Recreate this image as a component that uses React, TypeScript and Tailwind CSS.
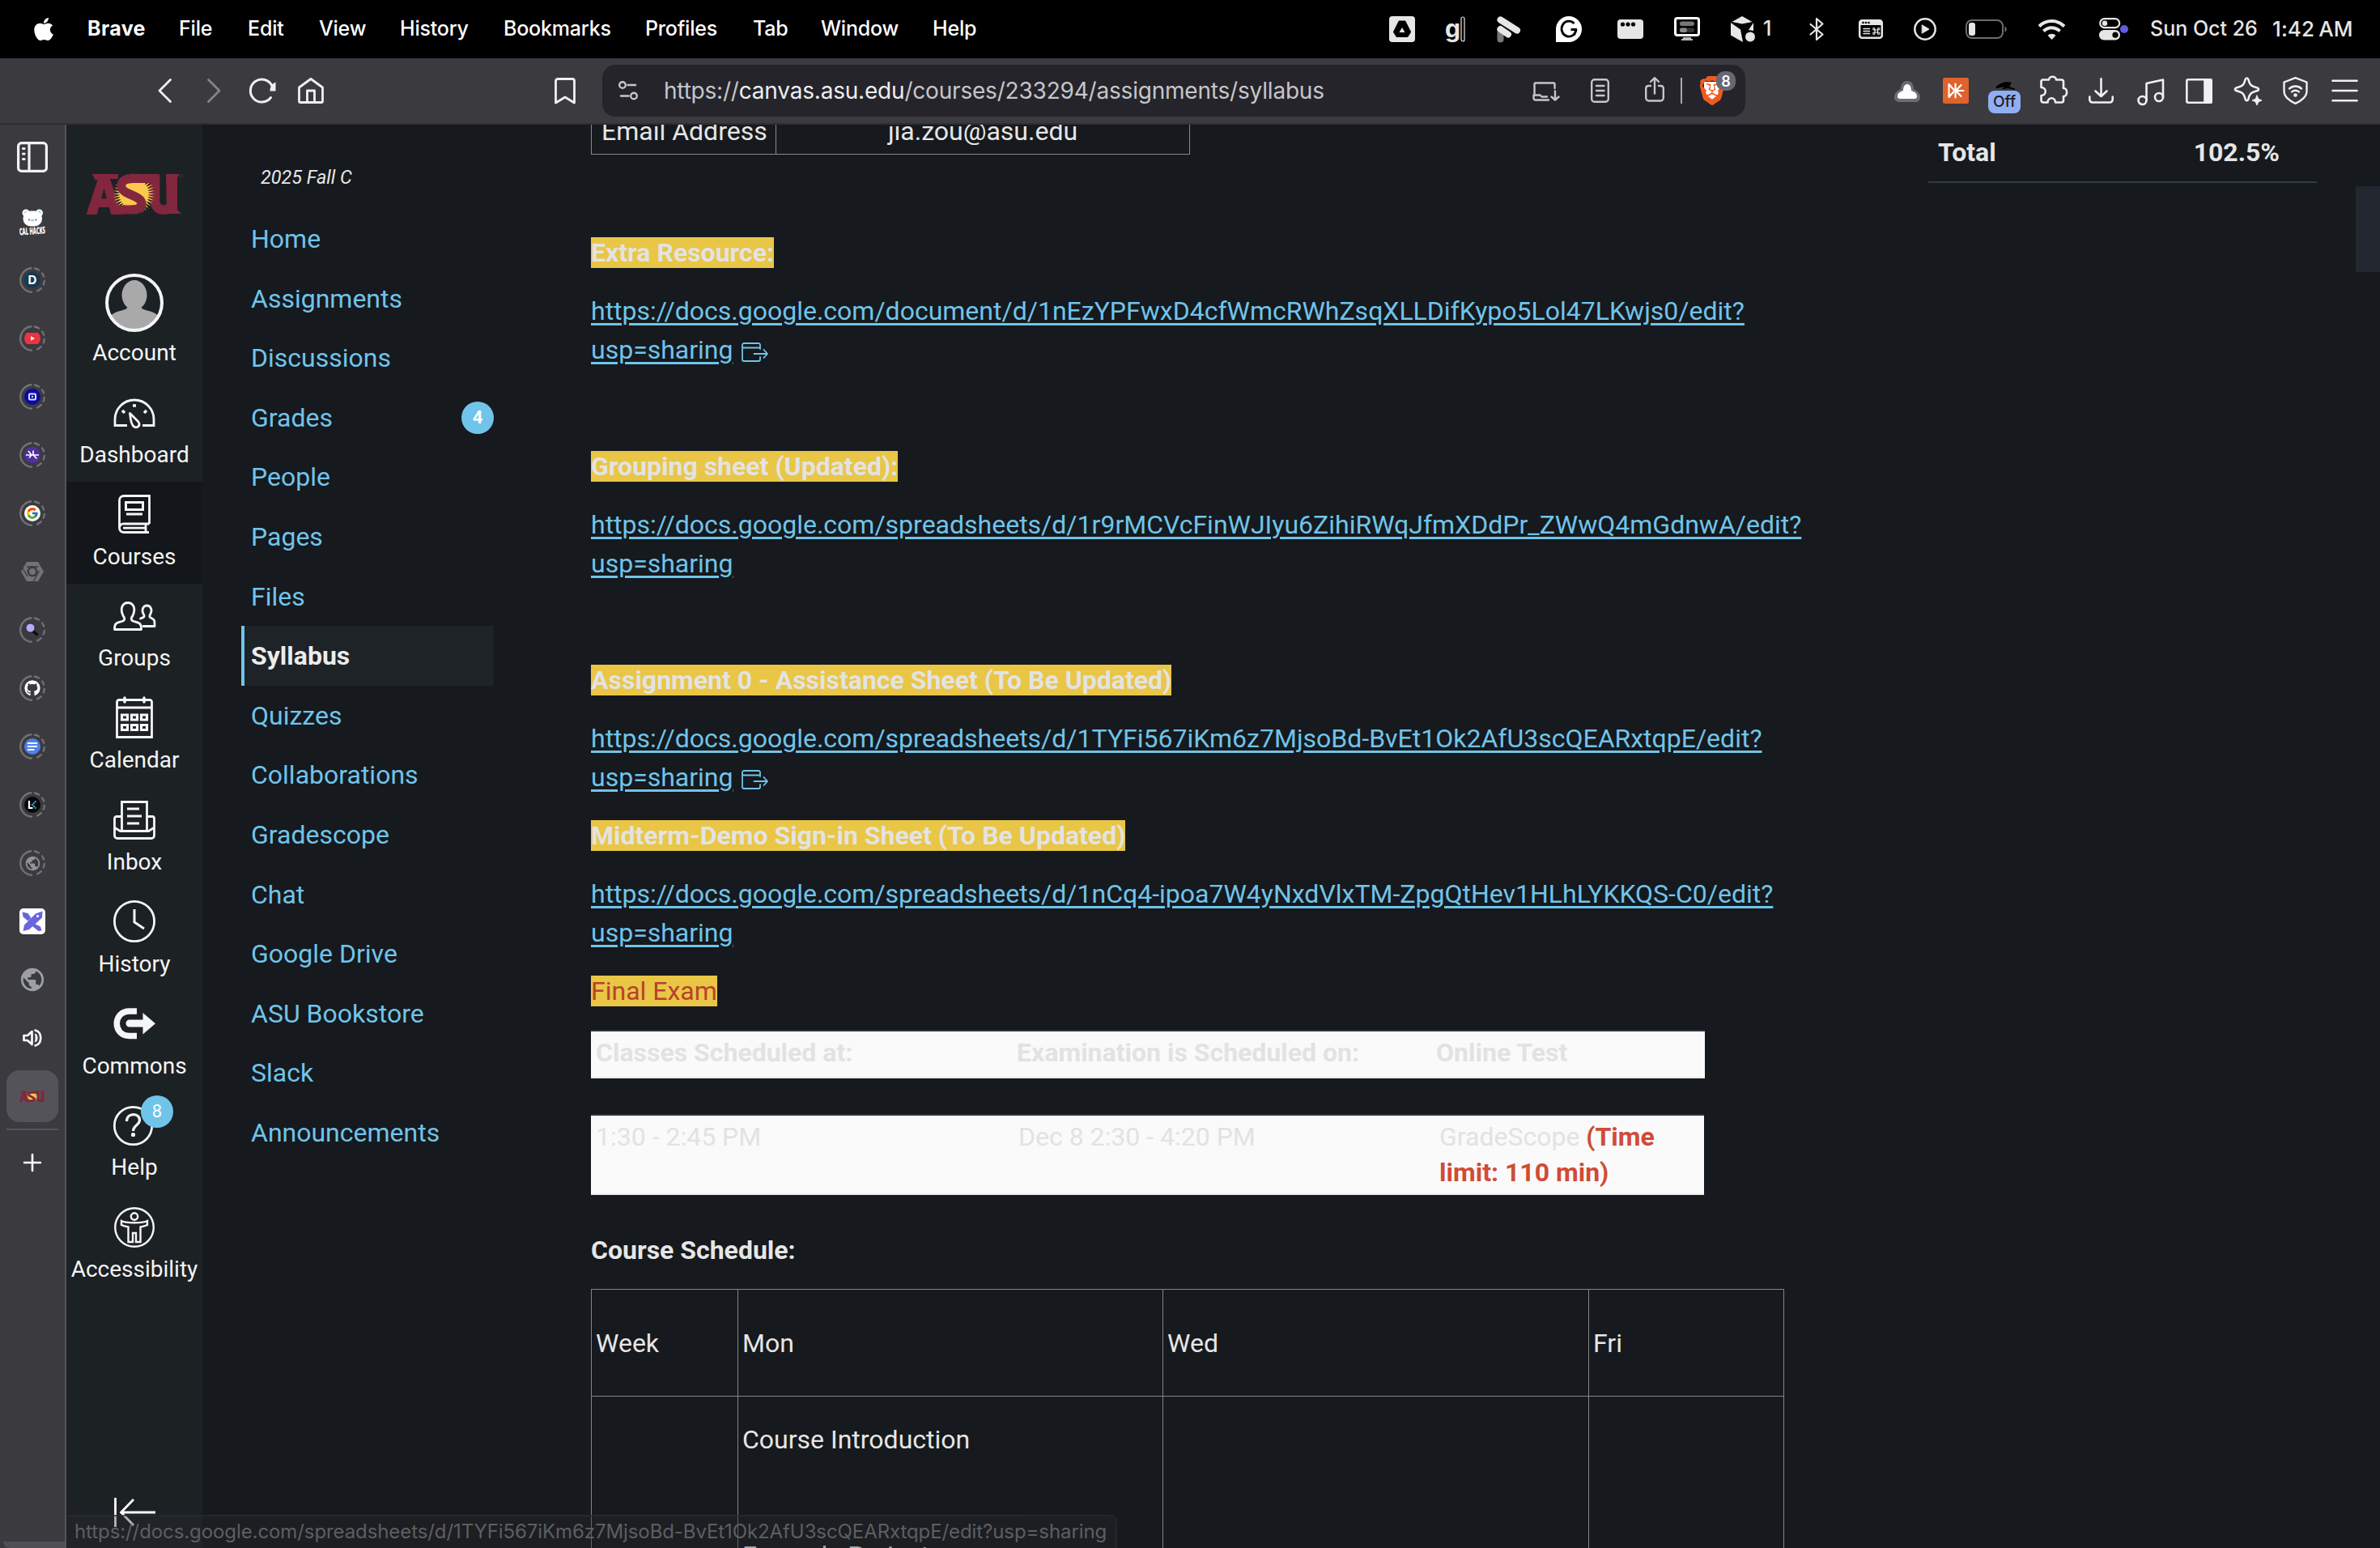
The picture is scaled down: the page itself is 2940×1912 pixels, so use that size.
import React from "react";
import { FaApple } from "react-icons/fa";
import { FaGithub } from "react-icons/fa6";
import { FcGoogle } from "react-icons/fc";
import { SiBrave } from "react-icons/si";
import { MdPublic } from "react-icons/md";

type Box = { w: number; h: number; className?: string; sw?: number; children: React.ReactNode };

function Ico({ w, h, className = "", sw = 2.5, children }: Box) {
  return (
    <svg width={w} height={h} viewBox={`0 0 ${w} ${h}`} fill="none" stroke="currentColor" strokeWidth={sw} strokeLinecap="round" strokeLinejoin="round" className={`shrink-0 overflow-visible ${className}`}>
      {children}
    </svg>
  );
}

function Slot({ className, children }: { className: string; children?: React.ReactNode }) {
  return <div className={`flex h-full shrink-0 items-center whitespace-nowrap ${className}`}>{children}</div>;
}

function MenuBar() {
  const menus: [string, string][] = [
    ["Brave", "w-[113px] font-bold tracking-[0.4px]"],
    ["File", "w-[85px]"],
    ["Edit", "w-[88px]"],
    ["View", "w-[100px]"],
    ["History", "w-[128px]"],
    ["Bookmarks", "w-[175px]"],
    ["Profiles", "w-[133px]"],
    ["Tab", "w-[84px]"],
    ["Window", "w-[138px]"],
    ["Help", "w-[100px]"],
  ];
  return (
    <header className="flex h-[72px] items-center bg-black font-['Inter'] text-[25px] font-medium tracking-[-0.2px] text-white">
      <Slot className="w-[108px] pl-[40px]">
        <FaApple className="h-[32px] w-[28px]" />
      </Slot>
      {menus.map(([m, c]) => (
        <Slot key={m} className={`pb-px ${c}`}>{m}</Slot>
      ))}
      <div className="ml-auto flex h-full w-[1224px] text-[#e6e6e6]">
        <Slot className="w-[69px]">
          <Ico w={32} h={32}>
            <rect width="32" height="32" rx="4" fill="#e6e6e6" stroke="none" />
            <path d="M12.5 6.5h7l6.5 13-3.5 5.5h-13L6 19.500z" fill="#000" stroke="#000" strokeWidth="2" />
            <path d="M16 14l3.500 6h-7z" fill="#e6e6e6" stroke="none" />
          </Ico>
        </Slot>
        <Slot className="w-[64px]">
          <span className="pb-[3px] text-[30px] leading-none font-bold">g</span>
          <Ico w={6} h={32} sw={1.2}><rect x="1" y="1" width="4" height="30" rx="2" /></Ico>
        </Slot>
        <Slot className="w-[73px]">
          <Ico w={30} h={32}>
            <path d="M4.500 17v11.500" stroke="#777" strokeWidth="8" />
            <path d="M4.500 16l9.500 6.500" strokeWidth="8" />
            <path d="M4.500 4.500l20.500 13" strokeWidth="8" />
          </Ico>
        </Slot>
        <Slot className="w-[76px]">
          <Ico w={32} h={32}>
            <path d="M0 32V16a16 16 0 1 1 16 16z" fill="#fff" stroke="none" />
            <path d="M22.500 9A9 9.500 0 1 0 25 16.500h-6.500M25 16.500l-2.500 7" stroke="#000" strokeWidth="2.800" strokeLinecap="butt" />
          </Ico>
        </Slot>
        <Slot className="w-[70px]">
          <Ico w={32} h={24}>
            <rect width="32" height="24" rx="4" fill="#e6e6e6" stroke="none" />
            <g fill="#000" stroke="none"><circle cx="6.500" cy="6" r="2.600" /><circle cx="13" cy="6" r="2.600" /><circle cx="19.500" cy="6" r="2.600" /></g>
          </Ico>
        </Slot>
        <Slot className="w-[70px]">
          <Ico w={32} h={30}>
            <rect x="1.500" y="1.500" width="29" height="21" rx="2.500" stroke="#fff" strokeWidth="3" />
            <path d="M11 25h10v2h2v2H9v-2h2z" fill="#bbb" stroke="none" />
            <rect x="7" y="5.500" width="18" height="5.500" rx="2.700" fill="#777" stroke="none" />
            <rect x="7" y="13.500" width="18" height="5.500" rx="2.700" fill="#333" stroke="none" />
            <rect x="7" y="13.500" width="9" height="5.500" rx="2.700" fill="#888" stroke="none" />
          </Ico>
        </Slot>
        <Slot className="w-[40px]">
          <Ico w={30} h={32}>
            <path d="M14 0l12.500 7L14 9.500 1.500 7z" fill="#e6e6e6" stroke="none" />
            <path d="M0 8l12 8.500L15 32 0 23.500z" fill="#e6e6e6" stroke="none" />
            <path d="M28 8v10l-6-1z" fill="#e6e6e6" stroke="none" />
            <circle cx="24" cy="25.500" r="6" fill="#e6e6e6" stroke="none" />
          </Ico>
        </Slot>
        <Slot className="w-[57px] pb-px">1</Slot>
        <Slot className="w-[61px]">
          <Ico w={18} h={28} sw={2.200}><path d="M1.500 8l15 12.500-7.500 6.500V1l7.500 6.500L1.500 20.500" /></Ico>
        </Slot>
        <Slot className="w-[68px]">
          <Ico w={30} h={24}>
            <rect x="1.200" y="1.200" width="27.600" height="21.600" rx="3" />
            <path d="M2 2h26v5H2z" fill="#e6e6e6" stroke="none" />
            <g fill="#000" stroke="none"><circle cx="5.500" cy="4" r="1.300" /><circle cx="9" cy="4" r="1.300" /><circle cx="12.500" cy="4" r="1.300" /></g>
            <path d="M6 11.500h7.500M6 14.500h7.500M6 17.500h7.500" strokeWidth="1.600" />
            <path d="M20 12.500v4M23.500 12.500v4M19.500 13h4.500M19.500 16h4.500" strokeWidth="1.200" />
            <g strokeWidth="1.100"><circle cx="18.800" cy="11.800" r="1.200" /><circle cx="24.700" cy="11.800" r="1.200" /><circle cx="18.800" cy="17.200" r="1.200" /><circle cx="24.700" cy="17.200" r="1.200" /></g>
          </Ico>
        </Slot>
        <Slot className="w-[64px]">
          <Ico w={28} h={28}>
            <circle cx="14" cy="14" r="12.700" />
            <path d="M10.500 9l8.500 5-8.500 5z" fill="#e6e6e6" strokeWidth="1" />
          </Ico>
        </Slot>
        <Slot className="w-[89px]">
          <Ico w={51} h={24}>
            <rect x="1" y="1" width="45" height="22" rx="7" stroke="#6d6d6d" strokeWidth="2" />
            <path d="M48.500 8.500c3 1 3 6 0 7z" fill="#6d6d6d" stroke="none" />
            <rect x="4" y="4" width="8" height="16" rx="3" fill="#e6e6e6" stroke="none" />
          </Ico>
        </Slot>
        <Slot className="w-[76px]">
          <Ico w={35} h={26}>
            <path d="M2 9.500a22 22 0 0 1 31 0M7.500 15.500a14 14 0 0 1 20 0" strokeWidth="4" strokeLinecap="butt" />
            <path d="M17.500 26l-5-5.200a7 7 0 0 1 10 0z" fill="#e6e6e6" stroke="none" />
          </Ico>
        </Slot>
        <Slot className="w-[62px]">
          <Ico w={36} h={28}>
            <rect x="1.200" y="1.200" width="24" height="11" rx="5.500" strokeWidth="2.200" />
            <circle cx="7" cy="6.700" r="3.200" fill="#e6e6e6" stroke="none" />
            <rect y="15" width="26" height="12.500" rx="6.200" fill="#e6e6e6" stroke="none" />
            <circle cx="20" cy="21.200" r="3.600" fill="#000" stroke="none" />
            <circle cx="31" cy="14" r="5" fill="#5e5ce6" stroke="none" />
          </Ico>
        </Slot>
        <Slot className="w-[152px] pb-px pl-px tracking-[0px]">Sun Oct 26</Slot>
        <Slot className="w-[120px] pb-px text-[26px] tracking-[0.1px] [word-spacing:-2px]">1:42 AM</Slot>
      </div>
    </header>
  );
}

function Toolbar() {
  return (
    <div className="flex h-[82px] border-b-2 border-[#2f2e33] bg-[#3b3a3f] pl-[196px] text-[#f0f0f2]">
      <Slot className="w-[60px]"><Ico w={17} h={30} sw={2.800}><path d="M14.500 1.500L1 15l13.500 13.500" /></Ico></Slot>
      <Slot className="w-[51px] text-[#858489]"><Ico w={17} h={30} sw={2.800}><path d="M1.500 1.500L15 15 1.500 28.500" /></Ico></Slot>
      <Slot className="w-[61px]">
        <Ico w={34} h={32} sw={3}>
          <path d="M27.500 24.500A14 14 0 1 1 29 10" />
          <path d="M33.500 5.500v11H26.500a11 11 0 0 1 7-11z" fill="currentColor" stroke="none" />
        </Ico>
      </Slot>
      <Slot className="w-[317px]">
        <Ico w={32} h={32} sw={2.800}>
          <path d="M1.500 29.500V12L16 1.500 30.500 12v17.500a1.500 1.500 0 0 1-1.500 1H3a1.500 1.500 0 0 1-1.500-1z" />
          <path d="M11.500 30V16h9v14" />
        </Ico>
      </Slot>
      <Slot className="w-[59px]"><Ico w={26} h={33} sw={2.800}><path d="M1.500 31V4a2.500 2.500 0 0 1 2.500-2.500h18A2.500 2.500 0 0 1 24.500 4v27L13 24z" /></Ico></Slot>
      <div className="my-2 flex h-[64px] w-[1412px] items-center rounded-[16px] bg-[#25242a] pl-[20px] font-['Inter'] text-[#c6c6ca]">
        <Slot className="w-[56px]">
          <Ico w={24} h={24} sw={2.400}><circle cx="5" cy="5" r="3.800" /><path d="M11.500 5H21" /><circle cx="19" cy="18.500" r="3.800" /><path d="M3 18.500h9.500" /></Ico>
        </Slot>
        <Slot className="w-[1073px] text-[28px] tracking-[-0.2px]">
          https://<span className="text-[#ededf0]">canvas.asu.edu</span>/courses/233294/assignments/syllabus
        </Slot>
        <Slot className="w-[72px]">
          <Ico w={33} h={24} sw={2.400} className="mb-[-2px]">
            <path d="M2.500 15V3A1.500 1.500 0 0 1 4 1.500h22A1.500 1.500 0 0 1 27.500 3v5M1.500 16.500h8l2 2h6.500M1.500 16.500V20a2.500 2.500 0 0 0 2.500 2.500h16M28 11.500V22M23.500 18.500l4.500 4 4.500-4" />
          </Ico>
        </Slot>
        <Slot className="w-[67px]">
          <Ico w={23} h={30} sw={2.400}><rect x="1.200" y="1.200" width="20.600" height="27.600" rx="3.500" /><path d="M7 9h9.500M7 15h9.500M7 21h9.500" /></Ico>
        </Slot>
        <Slot className="w-[44px]">
          <Ico w={24} h={31} sw={2.400} className="mb-[4px]"><path d="M7 11H4.500A3.300 3.300 0 0 0 1.200 14v12a3.500 3.500 0 0 0 3.500 3.500h14.600a3.500 3.500 0 0 0 3.500-3.500V14a3.300 3.300 0 0 0-3.300-3H17M12 20.500V1.500M7 6l5-4.800L17 6" /></Ico>
        </Slot>
        <div className="h-[32px] w-[2px] bg-[#a9a8ad]" />
        <div className="relative ml-[21px] h-[36px] w-[34px]">
          <div className="absolute top-[7px] left-[6px] h-[22px] w-[20px] rounded-b-full bg-white" />
          <SiBrave className="absolute top-0 left-[-2px] h-[36px] w-[36px] text-[#f05a22]" />
          <div className="absolute top-[-6px] left-[21px] flex h-[24px] w-[24px] items-center justify-center rounded-[10px] bg-[#666873] text-[18px] font-semibold text-white">8</div>
        </div>
      </div>
      <Slot className="ml-[184px] w-[60px]">
        <Ico w={32} h={26} className="mt-[2px]">
          <path d="M16 0c6 0 8 5 8 10 4 2 8 5 8 10 0 4-3 6-6 6H6c-3 0-6-2-6-6 0-5 4-8 8-10C8 5 10 0 16 0z" fill="#6d6c70" stroke="none" />
          <path d="M16 4c3.500 0 5 4 5 8 4 1.500 7 3 7 7 0 2-1 3-3 3H7c-2 0-3-1-3-3 0-4 3-5.500 7-7 0-4 1.500-8 5-8z" fill="#fff" stroke="none" />
        </Ico>
      </Slot>
      <Slot className="w-[56px]">
        <Ico w={32} h={32} sw={2.200}>
          <rect width="32" height="32" rx="2.500" fill="#e0622c" stroke="none" />
          <path d="M7.500 8v16l7-8z" stroke="#fff" />
          <path d="M15.500 7.500v17M17 16h8.500M17.500 14.500l5-5.500M17.500 17.500l5 5.500" stroke="#fff" />
        </Ico>
      </Slot>
      <Slot className="w-[64px]">
        <div className="mt-[12px] flex h-[44px] w-[40px] flex-col items-center">
          <Ico w={32} h={16}><path d="M5 12c5-6 13-8 20-6l-3 5 7 2.500v1.500l-9-2-7 1.500 3-3.500-9 2z" fill="#000" stroke="none" /></Ico>
          <div className="flex h-[28px] w-[40px] shrink-0 items-center justify-center rounded-[8px] bg-[#90aef4] font-['Inter'] text-[19px] font-medium text-[#1c1d22]">Off</div>
        </div>
      </Slot>
      <Slot className="w-[60px]">
        <Ico w={34} h={34} sw={2.600} className="mb-[3px]">
          <path d="M3.500 4.500H11c0-5 9-5 9 0h6.500A2.500 2.500 0 0 1 29 7v8c5.500 0 5.500 10 0 10v5a2.500 2.500 0 0 1-2.500 2.500H19c0-7-9.500-7-9.500 0H4A2.500 2.500 0 0 1 1.500 30v-6c7 0 7-10 0-10V6.500a2 2 0 0 1 2-2z" />
        </Ico>
      </Slot>
      <Slot className="w-[60px]"><Ico w={31} h={32} sw={2.600}><path d="M15.500 1.200V23M8.500 16.500l7 6.500 7-6.500M1.300 23.500V27a3.500 3.500 0 0 0 3.500 3.500h21.400a3.500 3.500 0 0 0 3.500-3.500v-3.500" /></Ico></Slot>
      <Slot className="w-[60px]"><Ico w={34} h={33} sw={2.600} className="mt-[3px]"><circle cx="6.500" cy="27" r="5" /><circle cx="27" cy="23" r="5" /><path d="M11.500 27V6L32 1.500V23" /></Ico></Slot>
      <Slot className="w-[60px]"><Ico w={33} h={31} sw={2.600}><rect x="1.300" y="1.300" width="30.400" height="28.400" rx="2" /><path d="M23.500 1.500h8v28h-8z" fill="currentColor" /></Ico></Slot>
      <Slot className="w-[60px]">
        <Ico w={36} h={34} sw={2.600}>
          <path d="M15.500 1.500c1 0 1.500.5 2 2 1.500 6 3 8 9.500 9.500 4 1 4 3.500 0 4.500-6.500 1.500-8 3.500-9.500 9.500-.800 3-3.200 3-4 0-1.500-6-3-8-9.500-9.500-4-1-4-3.500 0-4.500 6.500-1.500 8-3.500 9.500-9.500.500-1.500 1-2 2-2z" />
          <path d="M28 23l1.800 4.200L34 29l-4.200 1.800L28 35l-1.800-4.200L22 29l4.200-1.800z" fill="currentColor" strokeWidth="1" />
        </Ico>
      </Slot>
      <Slot className="w-[60px]">
        <Ico w={31} h={34} sw={2.400}>
          <path d="M15.500 1.200L29.500 6.500v11c0 7-7 12.500-14 15.300C8.500 30 1.500 24.500 1.500 17.500v-11z" />
          <path d="M8 14.500a11 11 0 0 1 15 0M11 18.500a6.500 6.500 0 0 1 9 0" />
          <circle cx="15.500" cy="22.500" r="2.300" fill="currentColor" stroke="none" />
        </Ico>
      </Slot>
      <Slot className="w-[60px]"><Ico w={33} h={28} sw={2.600}><path d="M1.500 1.800h30M1.500 14h30M1.500 26.200h30" /></Ico></Slot>
    </div>
  );
}

function AsuLogo({ w, h }: { w: number; h: number }) {
  const rays = Array.from({ length: 40 }, (_, i) => i * 9);
  return (
    <svg width={w} height={h} viewBox="0 0 118 50" className="shrink-0 overflow-visible">
      <g fontFamily="Roboto" fontWeight="900" fill="#82273e" stroke="#82273e">
        <path d="M7 0h32v6H15l-4 2z" stroke="none" />
        <text x="1" y="48.500" fontSize="66" textLength="41" lengthAdjust="spacingAndGlyphs" strokeWidth="2">A</text>
        <text x="77" y="48" fontSize="65" textLength="36" lengthAdjust="spacingAndGlyphs" strokeWidth="3">U</text>
        <path d="M78 0h10v14H78zM98 0h17l-3 4V44l5 5H99z" stroke="none" />
      </g>
      <g fill="#fbc94b">
        {rays.map((a) => (
          <path key={a} d="M57.200 8L58.500 -1.500L59.800 8z" transform={`rotate(${a} 58.500 24.500)`} />
        ))}
        <circle cx="58.500" cy="24.500" r="18" />
      </g>
      <path d="M86 5.500H58C46 5.500 42 10 43 16C45 26 67 26 68 36C68 42 62 44 54 44H36" fill="none" stroke="#82273e" strokeWidth="11" />
      <circle cx="117" cy="2.500" r="1.600" fill="none" stroke="#82273e" strokeWidth=".7" />
    </svg>
  );
}

function Ring({ children }: { children: React.ReactNode }) {
  return (
    <div className="relative flex h-8 w-8 items-center justify-center">
      <svg viewBox="0 0 32 32" className="absolute inset-0 h-8 w-8">
        <circle cx="16" cy="16" r="14.800" fill="none" stroke="#717075" strokeWidth="2.400" strokeLinecap="round" pathLength="100" strokeDasharray="47 5 6 6 5 6 5 6 6 100" transform="rotate(94 16 16)" />
      </svg>
      <div className="flex h-5 w-5 items-center justify-center overflow-hidden rounded-full">{children}</div>
    </div>
  );
}

function TabStrip() {
  const cell = "flex h-[72px] w-full shrink-0 items-center justify-center";
  return (
    <aside className="flex h-full w-[82px] shrink-0 flex-col items-center border-r-2 border-[#54535a] bg-[#3b3a3f] pt-[4px]">
      <div className={cell}>
        <Ico w={38} h={38} sw={3.200} className="text-[#f2f2f4]">
          <rect x="1.600" y="1.600" width="34.800" height="34.800" rx="4" />
          <path d="M15 2v34" />
          <path d="M7.500 8.500h1.500M7.500 15h1.500M7.500 21.500h1.500" />
        </Ico>
      </div>
      <div className={`${cell} mt-[8px]`}>
        <Ico w={32} h={32}>
          <g stroke="none">
            <circle cx="8" cy="5" r="4.500" fill="#fff" /><circle cx="24.500" cy="5" r="4.500" fill="#fff" />
            <circle cx="8" cy="5" r="2.200" fill="#a9d3f5" /><circle cx="24.500" cy="5" r="2.200" fill="#a9d3f5" />
            <rect x="4.500" y="2.500" width="23.500" height="19" rx="9" fill="#fff" />
            <circle cx="12" cy="13.500" r="1" fill="#745" /><circle cx="20.500" cy="13.500" r="1" fill="#745" />
            <ellipse cx="16.200" cy="14" rx="2.500" ry="1.600" fill="#a9d3f5" />
            <text x="0" y="31.500" fill="#fff" fontSize="12" fontWeight="800" fontFamily="Open Sans" textLength="32" lengthAdjust="spacingAndGlyphs" transform="rotate(-4 16 30)">CAL HACKS</text>
          </g>
        </Ico>
      </div>
      <div className={cell}>
        <Ring><div className="flex h-5 w-5 items-center justify-center rounded-[6px] bg-[#18394f] font-['Inter'] text-[15px] font-bold text-white">D</div></Ring>
      </div>
      <div className={cell}>
        <Ring><svg viewBox="0 0 20 20" className="h-5 w-5"><rect y="3" width="20" height="14" rx="4" fill="#ef3340" /><path d="M8 7.200v5.600l5-2.800z" fill="#fff" /></svg></Ring>
      </div>
      <div className={cell}>
        <Ring><svg viewBox="0 0 20 20" className="h-5 w-5"><rect width="20" height="20" fill="#0a0aa5" /><rect x="6" y="6.500" width="8" height="7" rx="1" fill="none" stroke="#d9dcff" strokeWidth="2" /><rect x="9" y="9" width="2" height="2" fill="#d9dcff" /></svg></Ring>
      </div>
      <div className={cell}>
        <Ring><svg viewBox="0 0 20 20" className="h-5 w-5"><rect width="20" height="20" fill="#50309c" /><path d="M2 10h16M5 5l4 5-3 3.500M15.500 14.500L11 10V4.500" stroke="#fff" strokeWidth="1.700" fill="none" /></svg></Ring>
      </div>
      <div className={cell}>
        <Ring><div className="flex h-5 w-5 items-center justify-center bg-white"><FcGoogle className="h-[16px] w-[16px]" /></div></Ring>
      </div>
      <div className={cell}>
        <svg viewBox="0 0 28 24" className="h-[24px] w-[28px]"><path d="M7 0h14l7 12-7 12H7L0 12z" fill="#737277" /><path d="M7 6h14M22.500 11l-7 13M8 18L1.500 7" stroke="#3b3a3f" strokeWidth="1.300" /><circle cx="14" cy="12" r="6.500" fill="#3b3a3f" /><circle cx="14" cy="12" r="4" fill="#737277" /></svg>
      </div>
      <div className={cell}>
        <Ring><svg viewBox="0 0 20 20" className="h-5 w-5"><path d="M10 11l6.500 5.500" stroke="#0c0c0e" strokeWidth="3.500" /><circle cx="7.500" cy="7.500" r="5.500" fill="#b9a8f5" stroke="#17161c" strokeWidth=".8" /></svg></Ring>
      </div>
      <div className={cell}>
        <Ring><FaGithub className="h-5 w-5 text-white" /></Ring>
      </div>
      <div className={cell}>
        <Ring><svg viewBox="0 0 20 20" className="h-5 w-5"><rect width="20" height="20" fill="#4e7fec" /><path d="M4 6h12M4 10h12M4 14h8.500" stroke="#fff" strokeWidth="2" /></svg></Ring>
      </div>
      <div className={cell}>
        <Ring><svg viewBox="0 0 20 20" className="h-5 w-5"><rect width="20" height="20" fill="#08080a" /><path d="M6 5v9h4.500" stroke="#fff" strokeWidth="2.200" fill="none" /><path d="M14.500 5.500L10 10l4.500 4.500" stroke="#3fb8d8" strokeWidth="2" strokeDasharray="2 .8" fill="none" /></svg></Ring>
      </div>
      <div className={cell}>
        <Ring><MdPublic className="h-[21px] w-[21px] shrink-0 text-[#8e959a]" /></Ring>
      </div>
      <div className={cell}>
        <svg viewBox="0 0 32 32" className="h-8 w-8"><rect width="32" height="32" rx="5" fill="#fff" /><g fill="#6965db"><path d="M3.500 4.500l7 1.500 4 6-4 3.500-6-5z" /><path d="M18 18.500l8 4 1.500 5-4 .5-7.500-6z" /><path d="M28.500 3.500l-.500 8L12 26l-7.500 2 1.500-7.500L20 6.500z" /></g><circle cx="22.500" cy="9.500" r="1.600" fill="#fff" /></svg>
      </div>
      <div className={cell}><MdPublic className="h-[34px] w-[34px] text-[#9aa0a6]" /></div>
      <div className={cell}>
        <Ico w={24} h={22} sw={2.600} className="text-white"><path d="M1.500 8v6h4.500l5.500 5V3L6 8z" /><path d="M15.500 6.500c3 1.500 3 7.500 0 9" fill="#fff" strokeWidth="1.500" /><path d="M15.500 1.500c9 2.500 9 16.500 0 19" /></Ico>
      </div>
      <div className={cell}>
        <div className="flex h-16 w-16 items-center justify-center rounded-[16px] bg-[#545359]"><AsuLogo w={32} h={15} /></div>
      </div>
      <div className="mt-[4px] h-[2px] w-[64px] shrink-0 bg-[#545359]" />
      <div className="flex h-[80px] items-center">
        <Ico w={22} h={22} sw={2.600} className="text-white"><path d="M11 1v20M1 11h20" /></Ico>
      </div>
      <div className="mt-auto ml-[4px] h-[8px] w-[76px] rounded-bl-[8px] bg-[#504f55]" />
    </aside>
  );
}

function NavItem({ label, active, children }: { label: string; active?: boolean; children: React.ReactNode }) {
  return (
    <div className={`flex h-[125.800px] w-full shrink-0 flex-col items-center ${active ? "bg-[#13161a]" : ""}`}>
      <div className="mt-[14px] flex h-[52px] items-center justify-center">{children}</div>
      <div className="mt-[12.300px] text-[28px] leading-[28px] whitespace-nowrap">{label}</div>
    </div>
  );
}

function GlobalNav() {
  return (
    <nav className="flex h-full w-[168px] shrink-0 flex-col items-center bg-[#1c2124] text-[#f5f5f5]">
      <div className="mt-[61px]"><AsuLogo w={118} h={50} /></div>
      <svg viewBox="0 0 72 72" className="mt-[73px] h-[72px] w-[72px] shrink-0">
        <circle cx="36" cy="36" r="34" fill="#1c2124" />
        <clipPath id="avatar"><circle cx="36" cy="36" r="33" /></clipPath>
        <g fill="#a9a9a9" clipPath="url(#avatar)"><ellipse cx="36" cy="26.500" rx="15.500" ry="18.500" /><path d="M27 42h18c0 4 18 3 22 13v17H5V55c4-10 22-9 22-13z" /></g>
        <circle cx="36" cy="36" r="34" fill="none" stroke="#f5f5f5" strokeWidth="4" />
      </svg>
      <div className="mt-[11.500px] text-[28px] leading-[28px]">Account</div>
      <div className="h-[20px] shrink-0" />
      <NavItem label="Dashboard">
        <Ico w={52} h={36} sw={2.800}>
          <path d="M17 33.500H2V26a24 24 0 0 1 48 0v7.500H36" strokeLinejoin="miter" strokeLinecap="butt" />
          <path d="M20.500 18.500l10 10c4 5-1 9-5 6.500-3-2-4.500-10-5-16.500z" />
          <path d="M24 9h4M11 15l3 3M41 15l-3 3" strokeWidth="3.500" strokeLinecap="butt" />
        </Ico>
      </NavItem>
      <NavItem label="Courses" active>
        <Ico w={40} h={48} sw={2.800}>
          <path d="M38.500 36V1.500H7A5.500 5.500 0 0 0 1.500 7v34A5.500 5.500 0 0 0 7 46.500h31M38.500 36H7a5 5 0 0 0-5.500 5M34 36v10M6 41.200h27" strokeLinecap="butt" strokeLinejoin="miter" />
          <path d="M9.500 9.500h21v9h-21zM10 24h20" strokeWidth="3" strokeLinecap="butt" strokeLinejoin="miter" />
        </Ico>
      </NavItem>
      <NavItem label="Groups">
        <Ico w={52} h={36} sw={2.800}>
          <path d="M1.500 34.500c0-8 2-8 9-10 4-1.200 4-4 1.500-7C8 9 11 1.500 18 1.500S28 9 24 17.500c-2.500 3-2.500 5.800 1.500 7 7 2 9 2 9 10z" />
          <path d="M33.500 21c4-1.500 6-2 3.500-6-2.500-5 0-10 4.500-10s7 5 4.500 10c-2.500 4-.500 5 2 6 3 1 3 3 3 9.500H37" />
        </Ico>
      </NavItem>
      <NavItem label="Calendar">
        <Ico w={46} h={52} sw={2.800} >
          <path d="M1.500 49.500V6A2.500 2.500 0 0 1 4 3.500h38A2.500 2.500 0 0 1 44.500 6v43.500zM2 13h42" strokeLinejoin="miter" />
          <path d="M11 1v5M35 1v5" strokeWidth="3.500" />
          <path d="M7.500 22h7v6h-7zM19.500 22h7v6h-7zM31.500 22h7v6h-7zM7.500 34.500h7v6h-7zM19.500 34.500h7v6h-7zM31.500 34.500h7v6h-7z" strokeLinejoin="miter" strokeWidth="3.200" />
        </Ico>
      </NavItem>
      <NavItem label="Inbox">
        <Ico w={52} h={48} sw={2.800}>
          <path d="M10.500 37V1.500h31V37M10 19.500H4A2.500 2.500 0 0 0 1.500 22v21A3.500 3.500 0 0 0 5 46.500h42a3.500 3.500 0 0 0 3.500-3.500V22a2.500 2.500 0 0 0-2.500-2.500h-6M2 33.500l6.500 4h35l6.500-4" strokeLinecap="butt" strokeLinejoin="miter" />
          <path d="M17 10h15M17 19h18M17 28h15" strokeLinecap="butt" />
        </Ico>
      </NavItem>
      <NavItem label="History">
        <Ico w={52} h={52} sw={2.800}><circle cx="26" cy="26" r="24.600" /><path d="M26 11v16l12 8" strokeLinecap="butt" strokeLinejoin="miter" strokeWidth="3" /></Ico>
      </NavItem>
      <NavItem label="Commons">
        <Ico w={52} h={38}>
          <path d="M29 4H20C-1 4-1 34.500 20 34.500h9" strokeWidth="7.500" strokeLinecap="butt" />
          <path d="M20 14.500h16.500V6L52 19.200 36.500 32.500v-9H20a4.500 4.500 0 0 1 0-9z" fill="currentColor" stroke="none" />
        </Ico>
      </NavItem>
      <NavItem label="Help">
        <div className="relative mr-[3px] h-[49px] w-[49px]">
          <Ico w={49} h={49} sw={2.800}><circle cx="24.500" cy="24.500" r="23.200" /><path d="M16.500 19c0-11 16-11 16-1.500 0 6-8 6.500-8 13.500" strokeLinecap="butt" strokeWidth="3.200" /><circle cx="24.500" cy="35.500" r="2.600" fill="currentColor" stroke="none" /></Ico>
          <div className="absolute top-[-13px] left-[34px] flex h-[40px] w-[40px] items-center justify-center rounded-full bg-[#70c4ea] text-[22px] text-white">8</div>
        </div>
      </NavItem>
      <NavItem label="Accessibility">
        <Ico w={50} h={50} sw={2.400}>
          <circle cx="25" cy="25" r="23.800" />
          <circle cx="25" cy="11.500" r="4.200" />
          <path d="M9 17c5 3 27 3 32 0v5c-3 1.500-5.500 2-8.500 2.500V43H27V32h-4v11h-5.500V24.500C14.500 24 12 23.500 9 22z" strokeLinejoin="miter" />
        </Ico>
      </NavItem>
      <div className="mt-auto mb-[25px] text-white">
        <Ico w={51} h={38} sw={2.800}><path d="M1.500 1v36M51 19H9M24 3L8.500 19 24 35" strokeLinecap="butt" strokeLinejoin="miter" /></Ico>
      </div>
    </nav>
  );
}

function CourseNav() {
  const items = ["Home", "Assignments", "Discussions", "Grades", "People", "Pages", "Files", "Syllabus", "Quizzes", "Collaborations", "Gradescope", "Chat", "Google Drive", "ASU Bookstore", "Slack", "Announcements"];
  return (
    <div className="w-[480px] shrink-0 pl-[48px]">
      <div className="mt-[50.500px] pl-[24px] text-[23.400px] leading-[28px] text-[#e8e8e8] italic">2025 Fall C</div>
      <ul className="mt-[25.700px] w-[312px] text-[32px] text-[#70c4ea]">
        {items.map((t) => (
          <li key={t} className={`flex h-[73.600px] items-center justify-between border-l-4 pl-[8px] ${t === "Syllabus" ? "border-[#70c4ea] bg-[#1e2327] font-bold text-[#ececec]" : "border-transparent"}`}>
            {t}
            {t === "Grades" && <span className="flex h-[40px] w-[40px] items-center justify-center rounded-full bg-[#70c4ea] text-[22px] font-bold text-white">4</span>}
          </li>
        ))}
      </ul>
    </div>
  );
}

function Mark({ children, red }: { children: string; red?: boolean }) {
  return <p className="mb-[24px]"><span className={`bg-[#e9c646] ${red ? "text-[#b8422b]" : "font-bold text-[#e3e3e3]"}`}>{children}</span></p>;
}

function Link({ url, ext }: { url: string; ext?: boolean }) {
  return (
    <p className="mb-[24px] whitespace-nowrap text-[#70c4ea]">
      <span className="underline decoration-[2.600px] underline-offset-[4px]">{url}<br />usp=sharing</span>
      {ext && (
        <Ico w={33} h={24} sw={1.800} className="ml-[10px] inline-block align-[-4px]">
          <path d="M23 8V3a2 2 0 0 0-2-2H3a2 2 0 0 0-2 2v18a2 2 0 0 0 2 2h18a2 2 0 0 0 2-2v-3M1 6.500h22M15.500 14H31M27.500 9l4.500 5-4.500 5" />
        </Ico>
      )}
    </p>
  );
}

function Content() {
  return (
    <main className="w-[1480px] shrink-0 text-[32px] leading-[48px] text-[#e6e6e6]">
      <div className="flex h-[37px] w-[740px] overflow-hidden border-r border-b border-l border-[#8a8a8a]">
        <div className="mt-[-16px] w-[228px] border-r border-[#8a8a8a] pl-[12px]">Email Address</div>
        <div className="mt-[-16px] flex-1 text-center">jia.zou@asu.edu</div>
      </div>
      <div className="mt-[97px]">
        <Mark>Extra Resource:</Mark>
        <Link url="https://docs.google.com/document/d/1nEzYPFwxD4cfWmcRWhZsqXLLDifKypo5Lol47LKwjs0/edit?" ext />
        <p className="mb-[24px]">&nbsp;</p>
        <Mark>Grouping sheet (Updated):</Mark>
        <Link url="https://docs.google.com/spreadsheets/d/1r9rMCVcFinWJIyu6ZihiRWqJfmXDdPr_ZWwQ4mGdnwA/edit?" />
        <p className="mb-[24px]">&nbsp;</p>
        <Mark>Assignment 0 - Assistance Sheet (To Be Updated)</Mark>
        <Link url="https://docs.google.com/spreadsheets/d/1TYFi567iKm6z7MjsoBd-BvEt1Ok2AfU3scQEARxtqpE/edit?" ext />
        <Mark>Midterm-Demo Sign-in Sheet (To Be Updated)</Mark>
        <Link url="https://docs.google.com/spreadsheets/d/1nCq4-ipoa7W4yNxdVlxTM-ZpgQtHev1HLhLYKKQS-C0/edit?" />
        <Mark red>Final Exam</Mark>
      </div>
      <div className="flex h-[60px] w-[1376px] border-t-2 border-b-2 border-t-[#2f3640] border-b-[#e8eaec] bg-[#fafafa] pt-[4px] pl-[6px] leading-[44px] font-bold text-[#e2e2e2]">
        <div className="w-[520px]">Classes Scheduled at:</div>
        <div className="w-[518px]">Examination is Scheduled on:</div>
        <div>Online Test</div>
      </div>
      <div className="mt-[44px] flex h-[100px] w-[1375px] border-t-2 border-b-2 border-t-[#2f3640] border-b-[#e8eaec] bg-[#fafafa] pt-[4px] pl-[6px] leading-[44px] text-[#e2e2e2]">
        <div className="w-[522px]">1:30 - 2:45 PM</div>
        <div className="w-[520px]">Dec 8 2:30 - 4:20 PM</div>
        <div>GradeScope <b className="font-bold text-[#d14b36]">(Time<br />limit: 110 min)</b></div>
      </div>
      <div className="mt-[44px] font-bold">Course Schedule:</div>
      <table className="mt-[24px] w-[1473px] table-fixed border-collapse text-left [&_td]:border [&_td]:border-[#858585] [&_td]:pl-[5px]">
        <colgroup><col className="w-[181px]" /><col className="w-[525px]" /><col className="w-[526px]" /><col className="w-[241px]" /></colgroup>
        <tbody>
          <tr className="h-[132px]">{["Week", "Mon", "Wed", "Fri"].map((t) => <td key={t}>{t}</td>)}</tr>
          <tr className="h-[400px]">
            <td />
            <td className="pt-[29px] align-top"><p>Course Introduction</p><p className="mt-[95px]">Example Projects</p></td>
            <td /><td />
          </tr>
        </tbody>
      </table>
    </main>
  );
}

export default function App() {
  return (
    <div className="relative flex h-[1912px] w-[2940px] flex-col overflow-hidden bg-[#16191d] font-['Roboto',sans-serif]">
      <MenuBar />
      <Toolbar />
      <div className="flex h-[1758px] overflow-hidden">
        <TabStrip />
        <GlobalNav />
        <CourseNav />
        <Content />
        <div className="ml-[172px] w-[480px] shrink-0">
          <div className="flex h-[72px] justify-between border-b-2 border-[#313a44] pt-[10px] pr-[46px] pl-[12px] text-[32px] leading-[48px] font-bold text-[#e6e6e6]">
            <span>Total</span>
            <span>102.5%</span>
          </div>
        </div>
        <div className="mt-[76px] ml-auto h-[106px] w-[30px] bg-[#23272f]" />
      </div>
      <div className="absolute bottom-0 left-[82px] flex h-[41px] w-[1298px] items-center rounded-tr-[8px] border-t-2 border-r-2 border-[#2a2c30]/70 bg-[#29272e]/35 pb-px pl-[10px] font-['Inter'] text-[24px] tracking-[-0.09px] whitespace-nowrap text-[#5d5e62]">
        https://docs.google.com/spreadsheets/d/1TYFi567iKm6z7MjsoBd-BvEt1Ok2AfU3scQEARxtqpE/edit?usp=sharing
      </div>
    </div>
  );
}
